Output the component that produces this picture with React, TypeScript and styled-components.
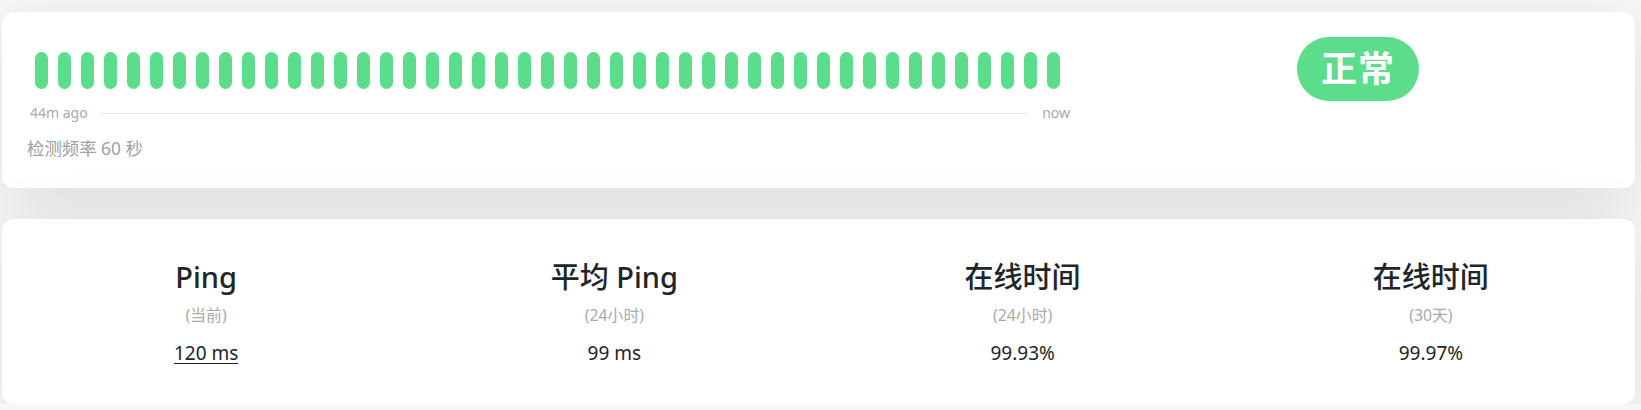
import styled, { createGlobalStyle } from "styled-components";

const GlobalStyle = createGlobalStyle`
  html, body {
    margin: 0;
    padding: 0;
    background: #f7f7f7;
    font-family: "Noto Sans", "Noto Sans CJK SC", sans-serif;
    color: #212529;
  }
`;

const Page = styled.div`
  padding: 12px 6px 0 2px;
  display: flex;
  flex-direction: column;
  gap: 31px;
`;

const Card = styled.div`
  background: #fff;
  border-radius: 12px;
  box-shadow: 0 15px 70px rgba(0, 0, 0, 0.1);
`;

const TopCard = styled(Card)`
  display: grid;
  grid-template-columns: 2fr 1fr;
  padding: 25px 0 27px 25px;
  height: 176px;
  box-sizing: border-box;
`;

const BeatColumn = styled.div`
  display: flex;
  flex-direction: column;
`;

const BeatRow = styled.div`
  display: flex;
  gap: 10px;
  padding: 15px 0 0 8px;
`;

const Beat = styled.div`
  width: 13px;
  height: 37px;
  border-radius: 7px;
  background: #5cdd8b;
`;

const Timeline = styled.div`
  display: flex;
  align-items: center;
  width: 1040px;
  margin: 15px 0 0 3px;
  font-size: 14px;
  line-height: 18px;
  color: #aaa;
`;

const TimeLine = styled.div`
  flex: 1;
  height: 1px;
  background: #e6e6e6;
  margin: 1px 14px 0 12px;
`;

const Interval = styled.div`
  margin-top: 15px;
  font-size: 17.4px;
  line-height: 23px;
  color: #a0a0a0;
`;

const BadgeColumn = styled.div`
  display: flex;
  justify-content: center;
  align-items: flex-start;
  padding-right: 18px;
`;

const Badge = styled.div`
  background: #5cdd8b;
  color: #fff;
  font-weight: 700;
  font-size: 36px;
  height: 64px;
  line-height: 64px;
  padding: 0 24px;
  border-radius: 32px;
  letter-spacing: 1px;
`;

const StatsCard = styled(Card)`
  display: grid;
  grid-template-columns: repeat(4, 1fr);
  padding: 40px 0 38px;
  height: 185px;
  box-sizing: border-box;
`;

const Stat = styled.div`
  display: flex;
  flex-direction: column;
  align-items: center;
`;

const StatTitle = styled.div`
  font-size: 29px;
  font-weight: 500;
  line-height: 36px;
  color: #212529;
`;

const StatSub = styled.div`
  margin-top: 10px;
  font-size: 15.8px;
  line-height: 20px;
  color: #aaa;
`;

const StatValue = styled.div<{ $link?: boolean }>`
  margin-top: 16px;
  font-size: 19px;
  line-height: 24px;
  color: #212529;
  text-decoration: ${(p) => (p.$link ? "underline" : "none")};
  text-underline-offset: 3px;
`;

const stats = [
  { title: "Ping", sub: "(当前)", value: "120 ms", link: true },
  { title: "平均 Ping", sub: "(24小时)", value: "99 ms" },
  { title: "在线时间", sub: "(24小时)", value: "99.93%" },
  { title: "在线时间", sub: "(30天)", value: "99.97%" },
];

export default function App() {
  return (
    <>
      <GlobalStyle />
      <Page>
        <TopCard>
          <BeatColumn>
            <BeatRow>
              {Array.from({ length: 45 }).map((_, i) => (
                <Beat key={i} />
              ))}
            </BeatRow>
            <Timeline>
              <span>44m ago</span>
              <TimeLine />
              <span>now</span>
            </Timeline>
            <Interval>检测频率 60 秒</Interval>
          </BeatColumn>
          <BadgeColumn>
            <Badge>正常</Badge>
          </BadgeColumn>
        </TopCard>
        <StatsCard>
          {stats.map((s, i) => (
            <Stat key={i}>
              <StatTitle>{s.title}</StatTitle>
              <StatSub>{s.sub}</StatSub>
              <StatValue $link={s.link}>{s.value}</StatValue>
            </Stat>
          ))}
        </StatsCard>
      </Page>
    </>
  );
}
